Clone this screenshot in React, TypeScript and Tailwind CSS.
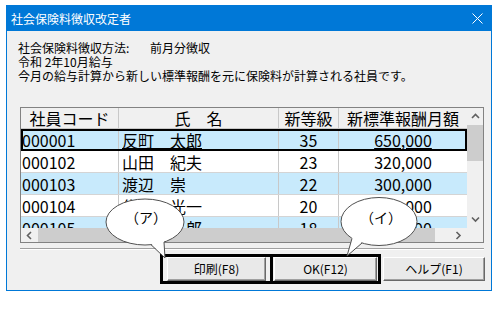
const font = "font-['Noto_Sans_CJK_JP',sans-serif]";

const rows = [
  { code: '000001', name: '反町　太郎', grade: '35', amount: '650,000' },
  { code: '000102', name: '山田　紀夫', grade: '23', amount: '320,000' },
  { code: '000103', name: '渡辺　崇', grade: '22', amount: '300,000' },
  { code: '000104', name: '佐藤　光一', grade: '20', amount: '260,000' },
  { code: '000105', name: '鈴木　一郎', grade: '18', amount: '220,000' },
];

function Chevron({ dir }: { dir: 'up' | 'down' | 'left' | 'right' }) {
  const d = {
    up: 'M1 5 L4.5 1.5 L8 5',
    down: 'M1 1.5 L4.5 5 L8 1.5',
    left: 'M5 1 L1.5 4.5 L5 8',
    right: 'M1.5 1 L5 4.5 L1.5 8',
  }[dir];
  const vertical = dir === 'up' || dir === 'down';
  return (
    <svg width={vertical ? 9 : 7} height={vertical ? 7 : 9} viewBox={vertical ? '0 0 9 7' : '0 0 7 9'}>
      <path d={d} fill="none" stroke="#606060" strokeWidth="1.6" />
    </svg>
  );
}

function Button({ label, w }: { label: string; w: string }) {
  return (
    <div
      className={`${w} h-[24px] flex items-center justify-center text-[12px] leading-[16px] text-black bg-[#e9e9e9] border-t border-l border-t-white border-l-white border-b border-r border-b-[#696969] border-r-[#696969] shadow-[inset_-1px_-1px_#a0a0a0]`}
    >
      {label}
    </div>
  );
}

export default function App() {
  return (
    <div className={`relative w-[502px] h-[317px] bg-white overflow-hidden ${font}`}>
      <div className="ml-[6px] mt-[5px] w-[486px] h-[286px] border border-[#0078d7] flex flex-col bg-[#f0f0f0]">
        {/* title bar */}
        <div className="h-[25px] bg-[#0078d7] flex items-center justify-between pl-[4px] pr-[8px] text-white text-[12px] leading-[16px]">
          <span>社会保険料徴収改定者</span>
          <svg width="11" height="11" viewBox="0 0 11 11">
            <path d="M0.5 0.5 L10.5 10.5 M10.5 0.5 L0.5 10.5" stroke="white" strokeWidth="1" />
          </svg>
        </div>

        <div className="flex-1 pt-[10px] pl-[11px] text-black">
          <div className="text-[12px] leading-[14px]">
            <div className="flex">
              <span className="w-[132px]">社会保険料徴収方法:</span>
              <span>前月分徴収</span>
            </div>
            <div>令和 2年10月給与</div>
            <div>今月の給与計算から新しい標準報酬を元に保険料が計算される社員です。</div>
          </div>

          {/* grid */}
          <div className="ml-[2px] mt-[24px] w-[464px] h-[136px] border border-[#828282] flex flex-col bg-white">
            <div className="flex h-[120px]">
              <div className="w-[446px] h-[120px] overflow-hidden">
                <div className="grid grid-cols-[98px_160px_60px_128px] h-[21px] bg-[#f0f0f0] text-[16px] leading-[20px] border-b border-[#c8c8c8]">
                  <div className="flex items-center justify-center border-r border-[#c8c8c8]">社員コード</div>
                  <div className="flex items-center justify-center border-r border-[#c8c8c8]">氏　名</div>
                  <div className="flex items-center justify-center border-r border-[#c8c8c8]">新等級</div>
                  <div className="flex items-center justify-center whitespace-nowrap">新標準報酬月額</div>
                </div>
                {rows.map((r, i) => (
                  <div
                    key={r.code}
                    className={`relative grid grid-cols-[98px_160px_60px_128px] h-[22px] text-[16px] leading-[20px] border-b border-[#d4d4d4] ${
                      i % 2 === 0 ? 'bg-[#c8eafc]' : 'bg-white'
                    } ${i === 0 ? 'z-10 outline-2 outline-black outline-offset-[-2px]' : ''}`}
                  >
                    <div className="flex items-center pl-[1px] border-r border-[#c8c8c8]">{r.code}</div>
                    <div className={`flex items-center pl-[3px] border-r border-[#c8c8c8] ${i === 0 ? 'underline' : ''}`}>
                      {r.name}
                    </div>
                    <div className="flex items-center justify-center border-r border-[#c8c8c8]">{r.grade}</div>
                    <div className={`flex items-center justify-center ${i === 0 ? 'underline' : ''}`}>{r.amount}</div>
                  </div>
                ))}
              </div>
              {/* vertical scrollbar */}
              <div className="w-[16px] bg-[#f0f0f0] flex flex-col">
                <div className="h-[17px] flex items-center justify-center">
                  <Chevron dir="up" />
                </div>
                <div className="h-[36px] bg-[#cdcdcd]" />
                <div className="flex-1" />
                <div className="h-[17px] flex items-center justify-center">
                  <Chevron dir="down" />
                </div>
              </div>
            </div>
            {/* horizontal scrollbar */}
            <div className="flex h-[14px]">
              <div className="w-[446px] bg-[#f0f0f0] flex items-center">
                <div className="w-[17px] flex items-center justify-center">
                  <Chevron dir="left" />
                </div>
                <div className="w-[397px] h-full bg-[#cdcdcd]" />
                <div className="flex-1" />
                <div className="w-[17px] flex items-center justify-center">
                  <Chevron dir="right" />
                </div>
              </div>
              <div className="w-[16px] bg-[#f0f0f0]" />
            </div>
          </div>

          {/* separator */}
          <div className="ml-[2px] mt-[5px] w-[464px] border-t border-t-[#a0a0a0] border-b border-b-white" />

          {/* buttons */}
          <div className="mt-[4px] ml-[142px] flex items-center">
            <div className="w-[113px] h-[30px] border-[3px] border-black flex items-center justify-center">
              <Button label="印刷(F8)" w="w-[99px]" />
            </div>
            <div className="-ml-[3px] w-[111px] h-[30px] border-[3px] border-black flex items-center justify-center">
              <Button label="OK(F12)" w="w-[103px]" />
            </div>
            <div className="ml-[2px]">
              <Button label="ヘルプ(F1)" w="w-[102px]" />
            </div>
          </div>
        </div>
      </div>

      {/* callouts */}
      <svg className="absolute left-0 top-0 pointer-events-none" width="502" height="317">
        <ellipse cx="145" cy="222" rx="39" ry="23" fill="white" stroke="#505050" strokeWidth="1" />
        <polygon points="151,243.5 165,258 164,241 157,238" fill="white" />
        <polyline points="151,244.7 165,258 164,242.1" fill="none" stroke="#505050" strokeWidth="1" />
        <ellipse cx="379" cy="221.5" rx="38" ry="24" fill="white" stroke="#505050" strokeWidth="1" />
        <polygon points="352,237.4 347,256 362,242 358,236" fill="white" />
        <polyline points="352,238.4 347,256 362,243" fill="none" stroke="#505050" strokeWidth="1" />
      </svg>
      <div className="absolute left-[124px] top-[208px] w-[44px] text-center text-[14px] leading-[18px] text-black">（ア）</div>
      <div className="absolute left-[359px] top-[208px] w-[44px] text-center text-[14px] leading-[18px] text-black">（イ）</div>
    </div>
  );
}
